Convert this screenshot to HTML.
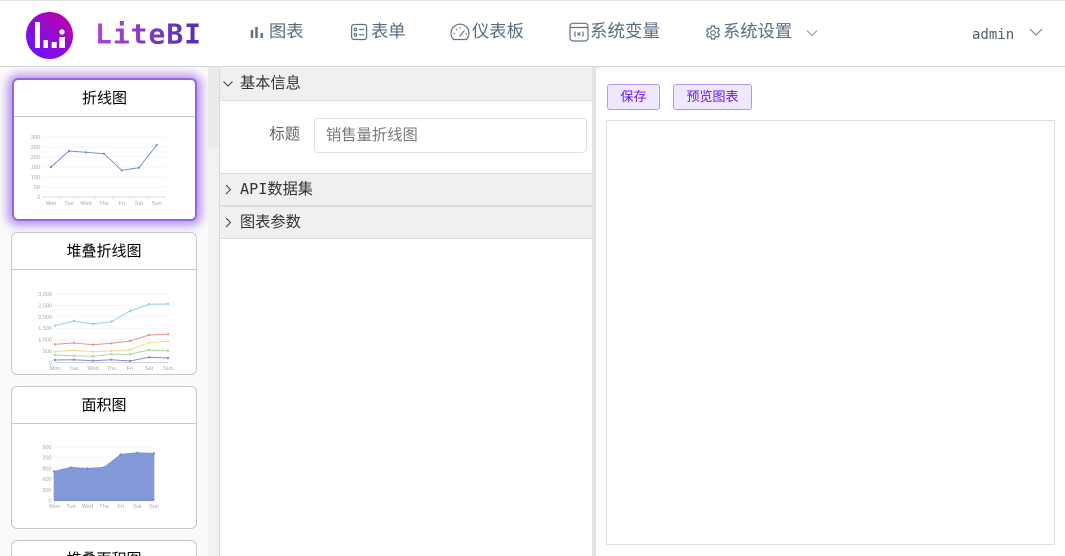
<!DOCTYPE html>
<html lang="zh"><head><meta charset="utf-8"><title>LiteBI</title>
<style>
*{box-sizing:border-box}
html,body{margin:0;padding:0;width:1065px;height:556px;overflow:hidden;background:#fff}
body{font-family:"DejaVu Sans Mono","Noto Sans CJK SC",monospace;position:relative}
.a{position:absolute}
.nav{position:absolute;top:19px;font-size:17.3px;line-height:25px;color:#586c80;font-family:"Liberation Sans","Noto Sans CJK SC",sans-serif;white-space:nowrap}
svg.i{position:absolute;fill:none;stroke:#5f7285;stroke-width:1.2}
.card{position:absolute;left:11px;width:186px;background:#fff;border:1px solid #c8c8c8;border-radius:6px;overflow:hidden}
.card .t{height:37px;border-bottom:1px solid #c8c8c8;text-align:center;font:15px/37px "Liberation Sans","Noto Sans CJK SC",sans-serif;color:#000}
.card svg{position:absolute;left:0;top:37px}
.card text{font:5.5px "Liberation Sans",sans-serif;fill:#aaa}
.hd{position:absolute;left:220px;width:372px;height:33px;background:#f0f0f0;border-bottom:1px solid #ddd;font-size:15.2px;line-height:30px;padding-left:20px;color:#333;white-space:nowrap}
.hd svg{position:absolute;left:2px;top:11px;fill:none;stroke:#444;stroke-width:1.1}
.btn{position:absolute;top:84px;height:26px;background:#efe8ff;border:1px solid #b794f6;border-radius:3px;color:#6a14f0;font:13px/24px "Liberation Sans","Noto Sans CJK SC",sans-serif;text-align:center}
</style></head><body>
<div class="a" style="left:0;top:0;width:1065px;height:1px;background:#e2e2e2"></div>
<div class="a" style="left:0;top:66px;width:1065px;height:1px;background:#d6d6d6"></div>
<div class="a" style="left:0;top:67px;width:1065px;height:4px;background:linear-gradient(#f3f3f3,#fff)"></div>

<svg class="a" style="left:26px;top:12px" width="47" height="47" viewBox="0 0 47 47">
<defs><linearGradient id="g" x1="0" y1="1" x2="1" y2="0"><stop offset="0.1" stop-color="#6a14ff"/><stop offset="0.9" stop-color="#bb00a8"/></linearGradient></defs>
<circle cx="23.5" cy="23.5" r="23.5" fill="url(#g)"/>
<g fill="#fff"><rect x="9" y="10" width="5" height="26"/><rect x="17.500" y="28" width="4.500" height="8"/><rect x="25.700" y="30" width="5" height="6"/><rect x="33.300" y="25" width="5.700" height="11"/><circle cx="36" cy="20" r="2.700"/></g>
</svg>
<svg class="a" style="left:90px;top:14px" width="120" height="40"><defs><linearGradient id="t" x1="0" x2="1" y1="0" y2="0"><stop offset="0" stop-color="#b044d8"/><stop offset="1" stop-color="#5030b0"/></linearGradient></defs>
<text x="5" y="29.500" textLength="106" style="font:bold 28px 'DejaVu Sans Mono',monospace" fill="url(#t)">LiteBI</text></svg>

<svg class="i" style="left:249px;top:24px;stroke-width:2.500" width="16" height="16"><path d="M3 6v8M7.500 3v11M12.800 9v5"/></svg>
<div class="nav" style="left:269px">图表</div>
<svg class="i" style="left:350px;top:23px" width="18" height="18" viewBox="0 0 18 18"><rect x="1.600" y="1.500" width="15" height="15" rx="2.500"/><circle cx="5.500" cy="6.500" r="1.300"/><circle cx="5.500" cy="11.800" r="1.300"/><path d="M9 6.500h5M9 11.800h5"/></svg>
<div class="nav" style="left:371px">表单</div>
<svg class="i" style="left:450px;top:23px" width="20" height="18" viewBox="0 0 20 18"><path d="M3.600 16.500h12.800c1.400-1.600 2.600-3.600 2.600-6.300A9 9 0 0 0 1 10.200c0 2.700 1.200 4.700 2.600 6.300z"/><path d="M9.500 13.500l5-6M3.500 10.500h1.500M6 6l1 1M10 4v1.500M15.500 11h1.500"/></svg>
<div class="nav" style="left:472px">仪表板</div>
<svg class="i" style="left:569px;top:22px" width="20" height="20" viewBox="0 0 20 20"><rect x="1" y="1.300" width="18" height="17.700" rx="3"/><path d="M1 5.500h18"/><path d="M6.500 9.500q-1.500 2.500 0 5M13.500 9.500q1.500 2.500 0 5M8.500 10.500l3 3M11.500 10.500l-3 3"/></svg>
<div class="nav" style="left:590px;font-size:17.500px">系统变量</div>
<svg class="i" style="left:705px;top:25px" width="16" height="16" viewBox="0 0 16 16"><path d="M6.600 1h2.800l.4 2 1.300.7 1.900-.7 1.400 2.400-1.500 1.400v1.400l1.500 1.400-1.400 2.400-1.900-.7-1.300.7-.4 2H6.600l-.4-2-1.300-.7-1.900.7L1.600 10l1.500-1.400V7.200L1.600 5.800 3 3.400l1.900.7 1.300-.7z"/><circle cx="8" cy="7.900" r="2.300"/></svg>
<div class="nav" style="left:723px">系统设置</div>
<svg class="i" style="left:806px;top:29px;stroke:#8a97a5;stroke-width:1" width="12" height="9"><path d="M1 1.500l5 5 5-5"/></svg>
<div class="a" style="left:972px;top:26px;font-size:14px;line-height:18px;color:#4d5e6e">admin</div>
<svg class="i" style="left:1029px;top:28px;stroke:#6a7684;stroke-width:1" width="14" height="9"><path d="M1 1l6 6 6-6"/></svg>

<!-- left column -->
<div class="a" style="left:0;top:67px;width:208px;height:489px;background:#fafafa;overflow:hidden">
  <div class="a" style="left:12px;top:12px;width:185px;height:142px;border-radius:6px;box-shadow:0 0 9px 5px rgba(150,90,235,.62);background:#fff"></div>
  <div class="card" style="top:11px;left:12px;width:185px;height:143px;border:2px solid #9168e0">
    <div class="t">折线图</div>
    <svg width="181" height="100" viewBox="0 0 181 100">
      <g stroke="#eceff5" stroke-width=".7"><path d="M29 20h122M29 30h122M29 40h122M29 50h122M29 60h122M29 70h122"/></g>
      <path d="M29 80h122M29 80v1.500M46.400 80v1.500M63.800 80v1.500M81.200 80v1.500M98.600 80v1.500M116 80v1.500M133.400 80v1.500M151 80v1.500" stroke="#bbb" stroke-width=".6"/>
      <g text-anchor="end"><text x="26" y="22">300</text><text x="26" y="32">250</text><text x="26" y="42">200</text><text x="26" y="52">150</text><text x="26" y="62">100</text><text x="26" y="72">50</text><text x="26" y="82">0</text></g>
      <g text-anchor="middle"><text x="37" y="88">Mon</text><text x="55" y="88">Tue</text><text x="72" y="88">Wed</text><text x="90" y="88">Thu</text><text x="107.700" y="88">Fri</text><text x="125" y="88">Sat</text><text x="142.700" y="88">Sun</text></g>
      <path d="M37 50L55 34L72 35.300L90 36.700L107.700 53.300L125 50.700L142.700 28" fill="none" stroke="#6f86d2" stroke-width=".9"/>
      <g fill="#6f86d2"><circle cx="37" cy="50" r="1.100"/><circle cx="55" cy="34" r="1.100"/><circle cx="72" cy="35.300" r="1.100"/><circle cx="90" cy="36.700" r="1.100"/><circle cx="107.700" cy="53.300" r="1.100"/><circle cx="125" cy="50.700" r="1.100"/><circle cx="142.700" cy="28" r="1.100"/></g>
    </svg>
  </div>
  <div class="card" style="top:165px;height:143px">
    <div class="t">堆叠折线图</div>
    <svg width="184" height="105" viewBox="0 0 184 105">
      <g stroke="#eef2f7" stroke-width=".7"><path d="M43 24h113M43 35.400h113M43 46.800h113M43 58.200h113M43 69.600h113M43 81h113"/></g>
      <path d="M43 92.300h113" stroke="#bbb" stroke-width=".6"/>
      <g text-anchor="end"><text x="40" y="26">3,000</text><text x="40" y="37.400">2,500</text><text x="40" y="48.800">2,000</text><text x="40" y="60.200">1,500</text><text x="40" y="71.600">1,000</text><text x="40" y="83">500</text><text x="40" y="94.300">0</text></g>
      <g text-anchor="middle"><text x="43" y="100">Mon</text><text x="62" y="100">Tue</text><text x="81" y="100">Wed</text><text x="99.500" y="100">Thu</text><text x="118" y="100">Fri</text><text x="137" y="100">Sat</text><text x="156" y="100">Sun</text></g>
      <g fill="none" stroke-width="1">
      <path d="M43 55.700L62 51L81 54L99.500 51.700L118 41L137 34.300L156 34" stroke="#8fd0ec"/>
      <path d="M43 74.300L62 73L81 74.700L99.500 73.300L118 71L137 65L156 64.300" stroke="#f09090"/>
      <path d="M43 81.700L62 80.300L81 81.700L99.500 81L118 79.700L137 72.700L156 71.300" stroke="#fbd98c"/>
      <path d="M43 85L62 85.700L81 86.300L99.500 84.300L118 84.300L137 80L156 80.700" stroke="#a8dc98"/>
      <path d="M43 90L62 89.700L81 90.700L99.500 89.700L118 91L137 87.300L156 88" stroke="#7c8fd6"/>
      </g>
      <g fill="#8fd0ec"><circle cx="43" cy="55.700" r="1.200"/><circle cx="62" cy="51" r="1.200"/><circle cx="81" cy="54" r="1.200"/><circle cx="99.500" cy="51.700" r="1.200"/><circle cx="118" cy="41" r="1.200"/><circle cx="137" cy="34.300" r="1.200"/><circle cx="156" cy="34" r="1.200"/></g>
      <g fill="#f09090"><circle cx="43" cy="74.300" r="1.200"/><circle cx="62" cy="73" r="1.200"/><circle cx="81" cy="74.700" r="1.200"/><circle cx="99.500" cy="73.300" r="1.200"/><circle cx="118" cy="71" r="1.200"/><circle cx="137" cy="65" r="1.200"/><circle cx="156" cy="64.300" r="1.200"/></g>
      <g fill="#fbd98c"><circle cx="43" cy="81.700" r="1.200"/><circle cx="62" cy="80.300" r="1.200"/><circle cx="81" cy="81.700" r="1.200"/><circle cx="99.500" cy="81" r="1.200"/><circle cx="118" cy="79.700" r="1.200"/><circle cx="137" cy="72.700" r="1.200"/><circle cx="156" cy="71.300" r="1.200"/></g>
      <g fill="#a8dc98"><circle cx="43" cy="85" r="1.200"/><circle cx="62" cy="85.700" r="1.200"/><circle cx="81" cy="86.300" r="1.200"/><circle cx="99.500" cy="84.300" r="1.200"/><circle cx="118" cy="84.300" r="1.200"/><circle cx="137" cy="80" r="1.200"/><circle cx="156" cy="80.700" r="1.200"/></g>
      <g fill="#7c8fd6"><circle cx="43" cy="90" r="1.200"/><circle cx="62" cy="89.700" r="1.200"/><circle cx="81" cy="90.700" r="1.200"/><circle cx="99.500" cy="89.700" r="1.200"/><circle cx="118" cy="91" r="1.200"/><circle cx="137" cy="87.300" r="1.200"/><circle cx="156" cy="88" r="1.200"/></g>
    </svg>
  </div>
  <div class="card" style="top:319px;height:143px">
    <div class="t">面积图</div>
    <svg width="184" height="105" viewBox="0 0 184 105">
      <path d="M42 23h100M42 33.700h100M42 44.300h100M42 55h100M42 66h100" stroke="#eef2f7" stroke-width=".7"/>
      <g text-anchor="end"><text x="39.500" y="25">500</text><text x="39.500" y="35.700">200</text><text x="39.500" y="46.300">900</text><text x="39.500" y="57">600</text><text x="39.500" y="68">300</text><text x="39.500" y="78.700">0</text></g>
      <path d="M42 47.300L58.700 43.300L75.300 44.300L92 43.300L108.700 30.300L125.300 28.700L142 29.300V76.700H42z" fill="#8598d8" stroke="#7388d2" stroke-width=".6"/>
      <g fill="#6f86d2"><circle cx="42" cy="47.300" r="1.100"/><circle cx="58.700" cy="43.300" r="1.100"/><circle cx="75.300" cy="44.300" r="1.100"/><circle cx="92" cy="43.300" r="1.100"/><circle cx="108.700" cy="30.300" r="1.100"/><circle cx="125.300" cy="28.700" r="1.100"/><circle cx="142" cy="29.300" r="1.100"/></g>
      <g text-anchor="middle"><text x="42.500" y="84">Mon</text><text x="59" y="84">Tue</text><text x="75.500" y="84">Wed</text><text x="92" y="84">Thu</text><text x="108.700" y="84">Fri</text><text x="125.300" y="84">Sat</text><text x="142" y="84">Sun</text></g>
    </svg>
  </div>
  <div class="card" style="top:473px;height:16px;border-bottom:0;border-radius:6px 6px 0 0">
    <div class="t">堆叠面积图</div>
  </div>
</div>
<div class="a" style="left:208px;top:67px;width:11px;height:489px;background:#f2f2f2"></div>
<div class="a" style="left:208px;top:67px;width:11px;height:81px;background:#ebebeb;border-radius:0 0 5px 5px"></div>

<!-- middle -->
<div class="a" style="left:219px;top:67px;width:1px;height:489px;background:#d8d8d8"></div>
<div class="hd" style="top:68px">基本信息<svg width="14" height="10"><path d="M1.500 2.500l4.500 4.500 4.500-4.500"/></svg></div>
<div class="a" style="left:269.500px;top:124px;font:15.300px/21px 'Liberation Sans','Noto Sans CJK SC',sans-serif;color:#606266">标题</div>
<div class="a" style="left:314px;top:118px;width:273px;height:35px;border:1px solid #dcdfe6;border-radius:4px;padding-left:11px;font:15.300px/33px 'Liberation Sans','Noto Sans CJK SC',sans-serif;color:#7a7a7a">销售量折线图</div>
<div class="a" style="left:220px;top:173px;width:372px;height:1px;background:#ddd"></div>
<div class="hd" style="top:174px;height:32px">API数据集<svg width="14" height="14" style="top:9px"><path d="M4 2l4.500 4.500-4.500 4.500"/></svg></div>
<div class="a" style="left:220px;top:205px;width:372px;height:2px;background:#ddd"></div>
<div class="hd" style="top:207px;height:32px">图表参数<svg width="14" height="14" style="top:9px"><path d="M4 2l4.500 4.500-4.500 4.500"/></svg></div>
<div class="a" style="left:592px;top:67px;width:4px;height:489px;background:#e2e2e8"></div>

<!-- right -->
<div class="btn" style="left:607px;width:53px">保存</div>
<div class="btn" style="left:673px;width:79px">预览图表</div>
<div class="a" style="left:606px;top:120px;width:449px;height:425px;border:1px solid #dfdfdf"></div>
</body></html>
